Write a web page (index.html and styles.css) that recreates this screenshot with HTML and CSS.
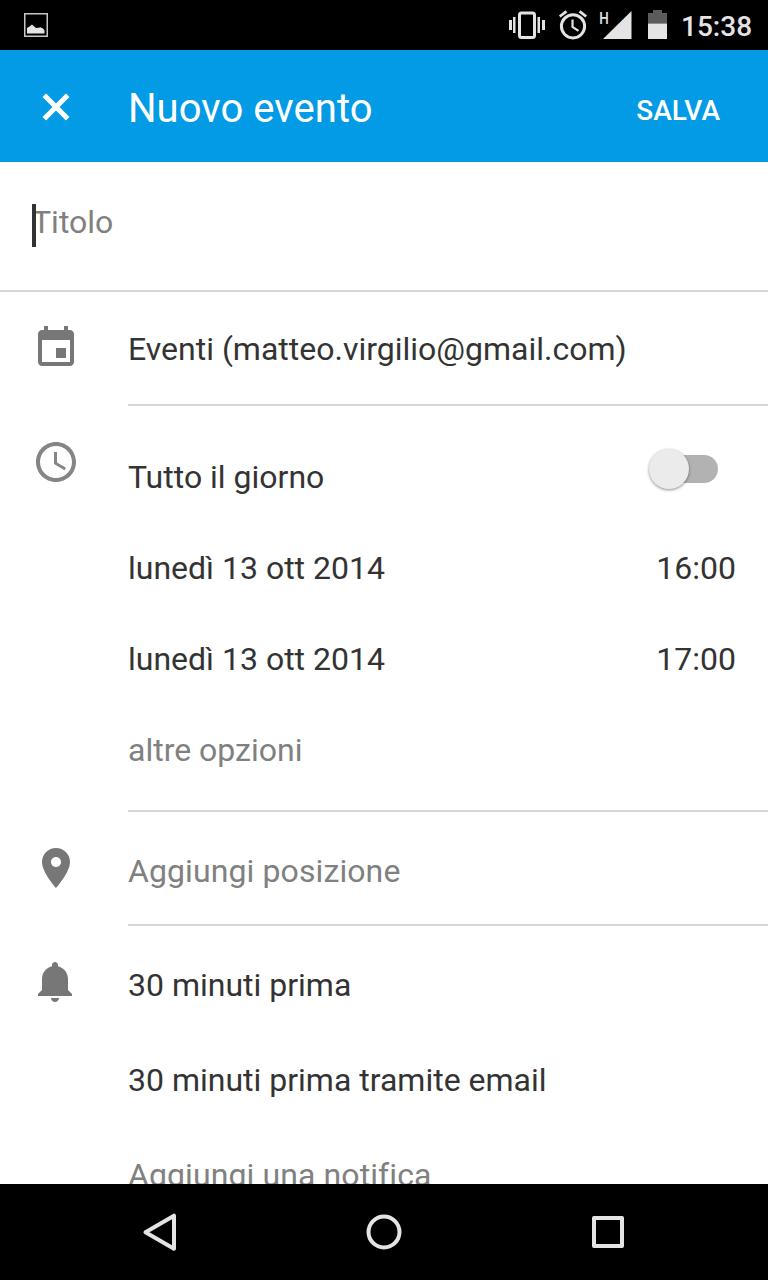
FILE: index.html
```
<!DOCTYPE html>
<html lang="it">
<head>
<meta charset="utf-8">
<title>Nuovo evento</title>
<link rel="stylesheet" href="styles.css">
</head>
<body>
<div class="screen">
  <div class="status">
    <svg class="picture" width="24" height="24" viewBox="0 0 24 24"><path d="M.75.75h22.5v22.5H.75z" fill="none" stroke="#c4c8c4" stroke-width="1.5"/><path d="M3 20.500V15l2.500-1.500L8 11.500l2.500 2.300 1.500 1.200 2.500-.2 2-.6 2.500 1.200 1.500 2v3.100z" fill="#e4e4e4"/></svg>
    <svg class="status-icons" width="160" height="50" viewBox="0 0 160 50">
      <g fill="#e4e4e4">
        <path d="M1 20h3v10H1zM5 17h2.500v16H5zM29.500 17H32v16h-2.500zM34 20h3v10h-3z"/>
        <rect x="11.500" y="13" width="15" height="24.500" rx="2" fill="none" stroke="#e4e4e4" stroke-width="3"/>
        <path d="M123.500 11v28H95z"/>
        <path d="M140 23.300h19V39h-19z"/>
      </g>
      <path d="M140 13h5v-3h9v3h5v10.300h-19z" fill="#5c5c5c"/>
      <g fill="none" stroke="#e4e4e4">
        <circle cx="65" cy="26.300" r="11.600" stroke-width="3"/>
        <path d="M64.500 19.500v7.300l6 4" stroke-width="2.200"/>
        <path d="M51.800 16.500l6.600-5.200M78.200 16.500l-6.600-5.200" stroke-width="2.800"/>
      </g>
      <text class="network" x="91.300" y="23.500" textLength="9.500" lengthAdjust="spacingAndGlyphs">H</text>
    </svg>
    <span class="clock">15:38</span>
  </div>

  <div class="toolbar">
    <svg class="close" width="48" height="48" viewBox="0 0 48 48"><path d="M12.300 13.300l23.400 23.400M35.700 13.300L12.300 36.700"/></svg>
    <h1>Nuovo evento</h1>
    <span class="save">SALVA</span>
  </div>

  <div class="content">
    <div class="title-field"><i class="cursor"></i><span>Titolo</span></div>

    <div class="section account">
      <svg class="icon" viewBox="0 0 24 24"><path d="M17 12h-5v5h5v-5zM16 1v2H8V1H6v2H5c-1.110 0-1.990.9-1.990 2L3 19c0 1.100.89 2 2 2h14c1.100 0 2-.9 2-2V5c0-1.100-.9-2-2-2h-1V1h-2zm3 18H5V8h14v11z"/></svg>
      <div class="rows">
        <div class="row">Eventi (matteo.virgilio@gmail.com)</div>
      </div>
    </div>

    <div class="section time">
      <svg class="icon light" viewBox="0 0 24 24"><path d="M11.990 2C6.470 2 2 6.480 2 12s4.470 10 9.990 10C17.520 22 22 17.520 22 12S17.520 2 11.990 2zM12 20c-4.420 0-8-3.580-8-8s3.580-8 8-8 8 3.580 8 8-3.580 8-8 8zm.5-13H11v6l5.250 3.150.75-1.230-4.500-2.670z"/></svg>
      <div class="rows">
        <div class="row"><span>Tutto il giorno</span><span class="switch"></span></div>
        <div class="row"><span>lunedì 13 ott 2014</span><span>16:00</span></div>
        <div class="row"><span>lunedì 13 ott 2014</span><span>17:00</span></div>
        <div class="row hint">altre opzioni</div>
      </div>
    </div>

    <div class="section place">
      <svg class="icon" viewBox="0 0 24 24"><path d="M12 2C8.130 2 5 5.130 5 9c0 5.250 7 13 7 13s7-7.750 7-13c0-3.870-3.130-7-7-7zm0 9.500c-1.380 0-2.500-1.120-2.500-2.500s1.120-2.500 2.500-2.500 2.500 1.120 2.500 2.500-1.120 2.500-2.500 2.500z"/></svg>
      <div class="rows">
        <div class="row hint add">Aggiungi posizione</div>
      </div>
    </div>

    <div class="section reminders">
      <svg class="icon" viewBox="0 0 24 24"><path d="M11.500 22c1.100 0 2-.9 2-2h-4c0 1.100.9 2 2 2zm6.500-6v-5.500c0-3.070-2.130-5.640-5-6.320V3.500c0-.83-.67-1.500-1.500-1.500S10 2.670 10 3.500v.68c-2.870.68-5 3.250-5 6.320V16l-2 2v1h17v-1l-2-2z"/></svg>
      <div class="rows">
        <div class="row">30 minuti prima</div>
        <div class="row">30 minuti prima tramite email</div>
        <div class="row hint add">Aggiungi una notifica</div>
      </div>
    </div>
  </div>

  <div class="navbar">
    <svg width="48" height="48" viewBox="0 0 48 48"><path d="M38 7.700v33L9.500 24.200z"/></svg>
    <svg width="48" height="48" viewBox="0 0 48 48"><circle cx="24" cy="24" r="15.500"/></svg>
    <svg width="48" height="48" viewBox="0 0 48 48"><path d="M10 10h28v28H10z"/></svg>
  </div>
</div>
</body>
</html>
```

FILE: styles.css
```
* { box-sizing: border-box; }
body {
  margin: 0;
  background: #fff;
  font-family: Roboto, sans-serif;
  font-size: 32px;
  color: #333;
}
.screen {
  display: flex;
  flex-direction: column;
  width: 768px;
  height: 1280px;
  overflow: hidden;
}

/* status bar */
.status {
  display: flex;
  flex: none;
  align-items: center;
  height: 50px;
  padding: 0 17px 0 24px;
  background: #000;
  color: #e4e4e4;
}
.status-icons { margin-left: auto; }
.network { font-size: 16px; font-weight: 500; fill: #e4e4e4; }
.clock {
  width: 70px;
  margin-left: 13px;
  padding-top: 3px;
  font-size: 28px;
  font-weight: 500;
}

/* toolbar */
.toolbar {
  display: flex;
  flex: none;
  align-items: center;
  height: 112px;
  padding: 0 48px 0 32px;
  background: #039be5;
  color: #fff;
}
.close { fill: none; stroke: #fff; stroke-width: 5; }
.toolbar h1 {
  flex: 1;
  margin: 0 0 0 48px;
  padding-top: 4px;
  font-size: 40px;
  font-weight: 400;
  letter-spacing: .07px;
}
.save { padding-top: 8px; font-size: 28px; font-weight: 500; }

/* form */
.content { flex: 1; min-height: 0; overflow: hidden; }
.title-field {
  position: relative;
  height: 130px;
  padding: 0 32px;
  border-bottom: 2px solid #d6d6d6;
  color: #808080;
  line-height: 120px;
}
.cursor {
  position: absolute;
  top: 42px;
  left: 32px;
  width: 4px;
  height: 43px;
  background: #333;
}
.section { display: flex; }
.icon {
  flex: none;
  width: 48px;
  height: 48px;
  margin: 32px 48px 0 32px;
  fill: #777;
}
.icon.light { fill: #858585; }
.rows { flex: 1; border-bottom: 2px solid #d6d6d6; }
.row {
  display: flex;
  align-items: center;
  justify-content: space-between;
  height: 91px;
  padding-right: 32px;
}
.hint { color: #808080; }
.add { letter-spacing: .1px; }
.account .rows { height: 114px; padding-top: 2px; }
.account .row { height: 110px; }
.time .rows { height: 406px; padding-top: 25px; }
.place .rows { height: 114px; padding-top: 6px; }
.place .row { height: 106px; }
.reminders .rows { padding-top: 11px; border: 0; }
.reminders .row { height: 95px; }

.switch {
  position: relative;
  width: 58px;
  height: 28px;
  margin: 0 18px 16px 0;
  border-radius: 14px;
  background: #b2b2b2;
}
.switch::before {
  content: "";
  position: absolute;
  top: -6px;
  left: -11px;
  width: 40px;
  height: 40px;
  border-radius: 50%;
  background: #ebebeb;
  box-shadow: 0 1px 3px rgba(0, 0, 0, .45);
}

/* navigation bar */
.navbar {
  display: flex;
  flex: none;
  align-items: center;
  justify-content: space-between;
  height: 96px;
  padding: 0 136px;
  background: #000;
}
.navbar svg {
  fill: none;
  stroke: #e4e4e4;
  stroke-width: 4;
  stroke-linejoin: round;
}
```
